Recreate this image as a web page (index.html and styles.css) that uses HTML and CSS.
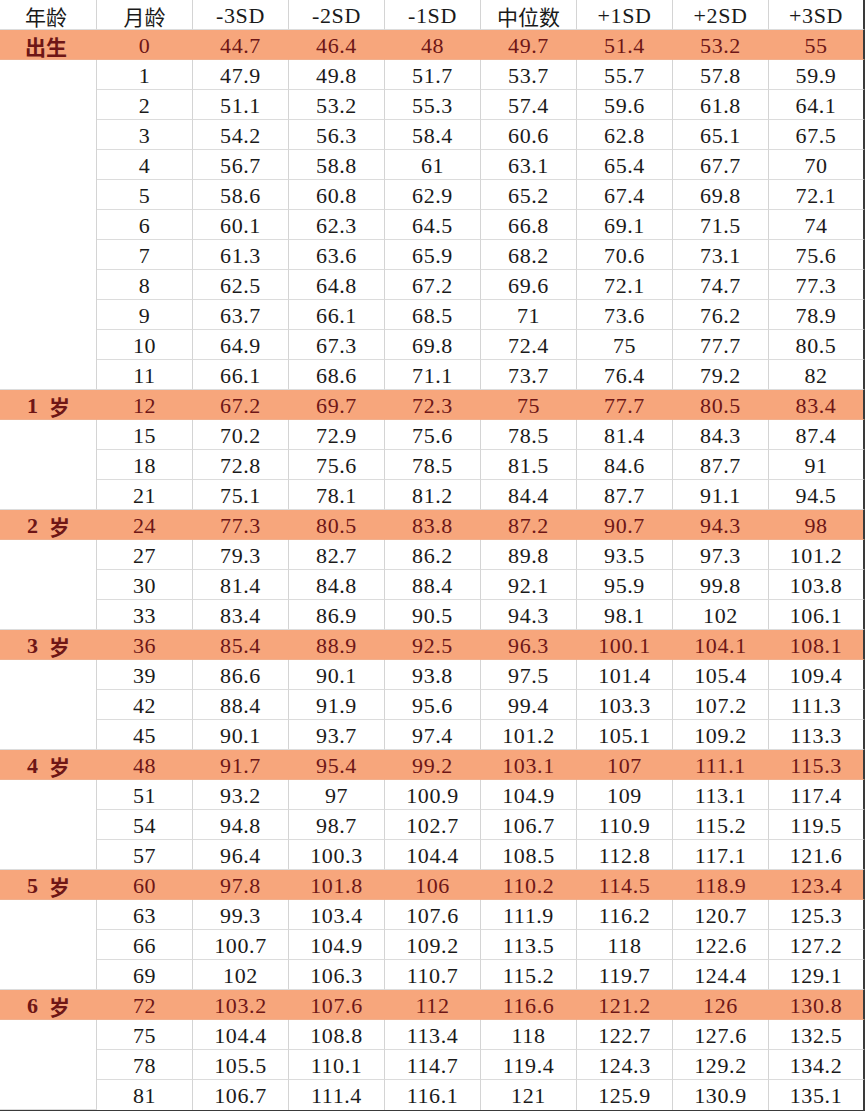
FILE: index.html
```html
<!DOCTYPE html>
<html lang="zh">
<head>
<meta charset="utf-8">
<link rel="stylesheet" href="styles.css">
</head>
<body>
<table class="grid">
<colgroup>
<col class="c-age"><col class="c-n"><col class="c-n"><col class="c-n"><col class="c-n"><col class="c-n"><col class="c-n"><col class="c-n"><col class="c-n">
</colgroup>
<thead>
<tr class="head"><th class="age">年龄</th><th class="cjk">月龄</th><th>-3SD</th><th>-2SD</th><th>-1SD</th><th class="cjk">中位数</th><th>+1SD</th><th>+2SD</th><th>+3SD</th></tr>
</thead>
<tbody id="tb"></tbody>
</table>
<script src="app.js"></script>
</body>
</html>
```
FILE: app.js
```js
const groups = [
  ["出生", null, [
    [0,"44.7","46.4","48","49.7","51.4","53.2","55"],
    [1,"47.9","49.8","51.7","53.7","55.7","57.8","59.9"],
    [2,"51.1","53.2","55.3","57.4","59.6","61.8","64.1"],
    [3,"54.2","56.3","58.4","60.6","62.8","65.1","67.5"],
    [4,"56.7","58.8","61","63.1","65.4","67.7","70"],
    [5,"58.6","60.8","62.9","65.2","67.4","69.8","72.1"],
    [6,"60.1","62.3","64.5","66.8","69.1","71.5","74"],
    [7,"61.3","63.6","65.9","68.2","70.6","73.1","75.6"],
    [8,"62.5","64.8","67.2","69.6","72.1","74.7","77.3"],
    [9,"63.7","66.1","68.5","71","73.6","76.2","78.9"],
    [10,"64.9","67.3","69.8","72.4","75","77.7","80.5"],
    [11,"66.1","68.6","71.1","73.7","76.4","79.2","82"]]],
  ["1", "岁", [
    [12,"67.2","69.7","72.3","75","77.7","80.5","83.4"],
    [15,"70.2","72.9","75.6","78.5","81.4","84.3","87.4"],
    [18,"72.8","75.6","78.5","81.5","84.6","87.7","91"],
    [21,"75.1","78.1","81.2","84.4","87.7","91.1","94.5"]]],
  ["2", "岁", [
    [24,"77.3","80.5","83.8","87.2","90.7","94.3","98"],
    [27,"79.3","82.7","86.2","89.8","93.5","97.3","101.2"],
    [30,"81.4","84.8","88.4","92.1","95.9","99.8","103.8"],
    [33,"83.4","86.9","90.5","94.3","98.1","102","106.1"]]],
  ["3", "岁", [
    [36,"85.4","88.9","92.5","96.3","100.1","104.1","108.1"],
    [39,"86.6","90.1","93.8","97.5","101.4","105.4","109.4"],
    [42,"88.4","91.9","95.6","99.4","103.3","107.2","111.3"],
    [45,"90.1","93.7","97.4","101.2","105.1","109.2","113.3"]]],
  ["4", "岁", [
    [48,"91.7","95.4","99.2","103.1","107","111.1","115.3"],
    [51,"93.2","97","100.9","104.9","109","113.1","117.4"],
    [54,"94.8","98.7","102.7","106.7","110.9","115.2","119.5"],
    [57,"96.4","100.3","104.4","108.5","112.8","117.1","121.6"]]],
  ["5", "岁", [
    [60,"97.8","101.8","106","110.2","114.5","118.9","123.4"],
    [63,"99.3","103.4","107.6","111.9","116.2","120.7","125.3"],
    [66,"100.7","104.9","109.2","113.5","118","122.6","127.2"],
    [69,"102","106.3","110.7","115.2","119.7","124.4","129.1"]]],
  ["6", "岁", [
    [72,"103.2","107.6","112","116.6","121.2","126","130.8"],
    [75,"104.4","108.8","113.4","118","122.7","127.6","132.5"],
    [78,"105.5","110.1","114.7","119.4","124.3","129.2","134.2"],
    [81,"106.7","111.4","116.1","121","125.9","130.9","135.1"]]]
];
const tb = document.getElementById("tb");
let html = "";
groups.forEach(([label, unit, rows]) => {
  rows.forEach((r, i) => {
    if (i === 0) {
      const lab = unit
        ? '<span class="num">' + label + '</span><span class="unit">' + unit + '</span>'
        : label;
      html += '<tr class="hl"><td class="age">' + lab + '</td>';
    } else if (i === 1) {
      html += '<tr><td class="age blank" rowspan="' + (rows.length - 1) + '"></td>';
    } else {
      html += '<tr>';
    }
    html += r.map(v => '<td>' + v + '</td>').join('') + '</tr>';
  });
});
tb.innerHTML = html;
```
FILE: styles.css
```css
html, body {
  margin: 0;
  padding: 0;
  background: #ffffff;
}
.grid {
  width: 865px;
  border-collapse: separate;
  border-spacing: 0;
  table-layout: fixed;
  font-family: "Liberation Serif", "Noto Sans CJK SC", serif;
  font-size: 22px;
  color: #1a1a1a;
  border-bottom: 2px solid #3a3a3a;
}
.c-age {
  width: 97px;
}
.c-n {
  width: 96px;
}
.grid tr {
  height: 30px;
}
.grid th,
.grid td {
  height: 27px;
  padding: 2px 0 0 0;
  text-align: center;
  vertical-align: middle;
  border-right: 1px solid #d4d4d4;
  border-bottom: 1px solid #dcdcdc;
  letter-spacing: 0.6px;
  white-space: nowrap;
  line-height: 24px;
  overflow: hidden;
}
.grid th {
  font-weight: normal;
}
.grid tr > :last-child {
  border-right: 2px solid #3a3a3a;
}
.grid .cjk,
.grid .age {
  font-family: "Noto Sans CJK SC", sans-serif;
  letter-spacing: 0;
  font-size: 21px;
}
.grid .age {
  text-align: left;
  padding-left: 25px;
}
.grid .age .num,
.grid .age .unit {
  display: inline-block;
  vertical-align: top;
  line-height: 24px;
  height: 24px;
}
.grid .age .num {
  font-family: "Liberation Serif", serif;
  font-size: 22px;
  width: 22px;
  margin-left: 2px;
}
.grid tbody tr:last-child td {
  border-bottom: none;
}
.hl td {
  background: #f7a67c;
  color: #6e1616;
  border-right-color: #f7a67c;
  border-bottom-color: #f0b08e;
}
.hl td.age {
  font-weight: bold;
}
.hl td:last-child {
  border-right: 2px solid #3a3a3a;
}
```
